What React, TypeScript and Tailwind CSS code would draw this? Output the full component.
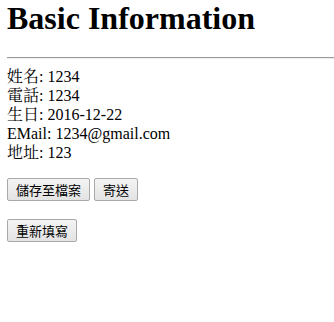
import React from 'react';

const rows: [string, string][] = [
  ['姓名', '1234'],
  ['電話', '1234'],
  ['生日', '2016-12-22'],
  ['EMail', '1234@gmail.com'],
  ['地址', '123'],
];

const btn =
  "h-[23px] px-[8px] border border-[#a9a9a9] rounded-[2px] bg-gradient-to-b from-[#f4f4f4] to-[#e3e3e3] text-[13px] leading-none text-black font-['Noto_Sans_CJK_TC',sans-serif]";

export default function App() {
  return (
    <div className="min-h-screen bg-white pl-[7px] text-black font-['Liberation_Serif','Noto_Serif_CJK_TC','Noto_Sans_CJK_TC',serif]">
      <h1 className="text-[32px] font-bold leading-[36px] mt-0 mb-[21px]">Basic Information</h1>
      <hr className="border-0 border-t border-t-[#9a9a9a] border-b border-b-[#eeeeee] h-[2px] mb-[8px]" />
      <div className="text-[16px] leading-[19px]">
        {rows.map(([k, v]) => (
          <div key={k}>
            {k}: {v}
          </div>
        ))}
      </div>
      <div className="mt-[16px] flex gap-[4px]">
        <button className={btn}>儲存至檔案</button>
        <button className={btn}>寄送</button>
      </div>
      <div className="mt-[18px] flex">
        <button className={btn}>重新填寫</button>
      </div>
    </div>
  );
}
